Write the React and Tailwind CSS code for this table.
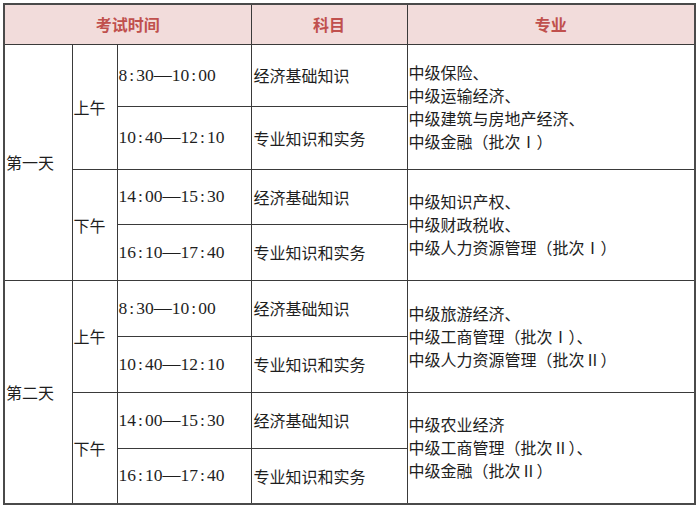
const cjk = "font-['Noto_Sans_CJK_SC',sans-serif]";

const days = [
  {
    day: "第一天",
    halves: [
      {
        label: "上午",
        heights: ["h-[62px]", "h-[63px]"],
        majors: ["中级保险、", "中级运输经济、", "中级建筑与房地产经济、", "中级金融（批次Ⅰ）"],
      },
      {
        label: "下午",
        heights: ["h-[55px]", "h-[56px]"],
        majors: ["中级知识产权、", "中级财政税收、", "中级人力资源管理（批次Ⅰ）"],
      },
    ],
  },
  {
    day: "第二天",
    halves: [
      {
        label: "上午",
        heights: ["h-[56px]", "h-[56px]"],
        majors: ["中级旅游经济、", "中级工商管理（批次Ⅰ）、", "中级人力资源管理（批次Ⅱ）"],
      },
      {
        label: "下午",
        heights: ["h-[56px]", "h-[56px]"],
        majors: ["中级农业经济", "中级工商管理（批次Ⅱ）、", "中级金融（批次Ⅱ）"],
      },
    ],
  },
];

const slots = {
  上午: [
    ["8:30", "10:00", "经济基础知识"],
    ["10:40", "12:10", "专业知识和实务"],
  ],
  下午: [
    ["14:00", "15:30", "经济基础知识"],
    ["16:10", "17:40", "专业知识和实务"],
  ],
};

// SimSun-like half-width digits: colon gets a full digit cell
function Clock({ value }) {
  const [h, m] = value.split(":");
  return (
    <>
      {h}
      <span className="inline-block w-[9px] text-center">:</span>
      {m}
    </>
  );
}

function Time({ from, to }) {
  return (
    <span className="font-['Liberation_Serif',serif] text-[17.5px]">
      <Clock value={from} />
      <span className="text-[18px]">—</span>
      <Clock value={to} />
    </span>
  );
}

const cell = "border border-[#3a3a3a] text-left align-middle px-[1px] py-0";

export default function App() {
  return (
    <div className={`bg-white w-[700px] h-[508px] pt-[3px] pl-[3px] ${cjk} text-[16px] text-[#1e1e1e]`}>
      <table className="border-collapse border-2 border-[#4a4a4a] table-fixed w-[691px]">
        <colgroup>
          <col className="w-[68px]" />
          <col className="w-[45px]" />
          <col className="w-[134px]" />
          <col className="w-[156px]" />
          <col className="w-[288px]" />
        </colgroup>
        <thead>
          <tr className="h-[40px] bg-[#f2dcdb] text-[#c0504d] font-bold">
            <th colSpan={3} className="border border-[#3a3a3a] text-center">考试时间</th>
            <th className="border border-[#3a3a3a] text-center">科目</th>
            <th className="border border-[#3a3a3a] text-center">专业</th>
          </tr>
        </thead>
        <tbody>
          {days.map((d) =>
            d.halves.map((h, hi) =>
              slots[h.label].map(([from, to, subject], si) => (
                <tr key={d.day + h.label + si} className={h.heights[si]}>
                  {hi === 0 && si === 0 && (
                    <td rowSpan={4} className={cell}>{d.day}</td>
                  )}
                  {si === 0 && (
                    <td rowSpan={2} className={cell}>{h.label}</td>
                  )}
                  <td className={cell}>
                    <Time from={from} to={to} />
                  </td>
                  <td className={`${cell} pl-[2px]`}>{subject}</td>
                  {si === 0 && (
                    <td rowSpan={2} className={`${cell} leading-[23px]`}>
                      {h.majors.map((m) => (
                        <div key={m}>{m}</div>
                      ))}
                    </td>
                  )}
                </tr>
              ))
            )
          )}
        </tbody>
      </table>
    </div>
  );
}
